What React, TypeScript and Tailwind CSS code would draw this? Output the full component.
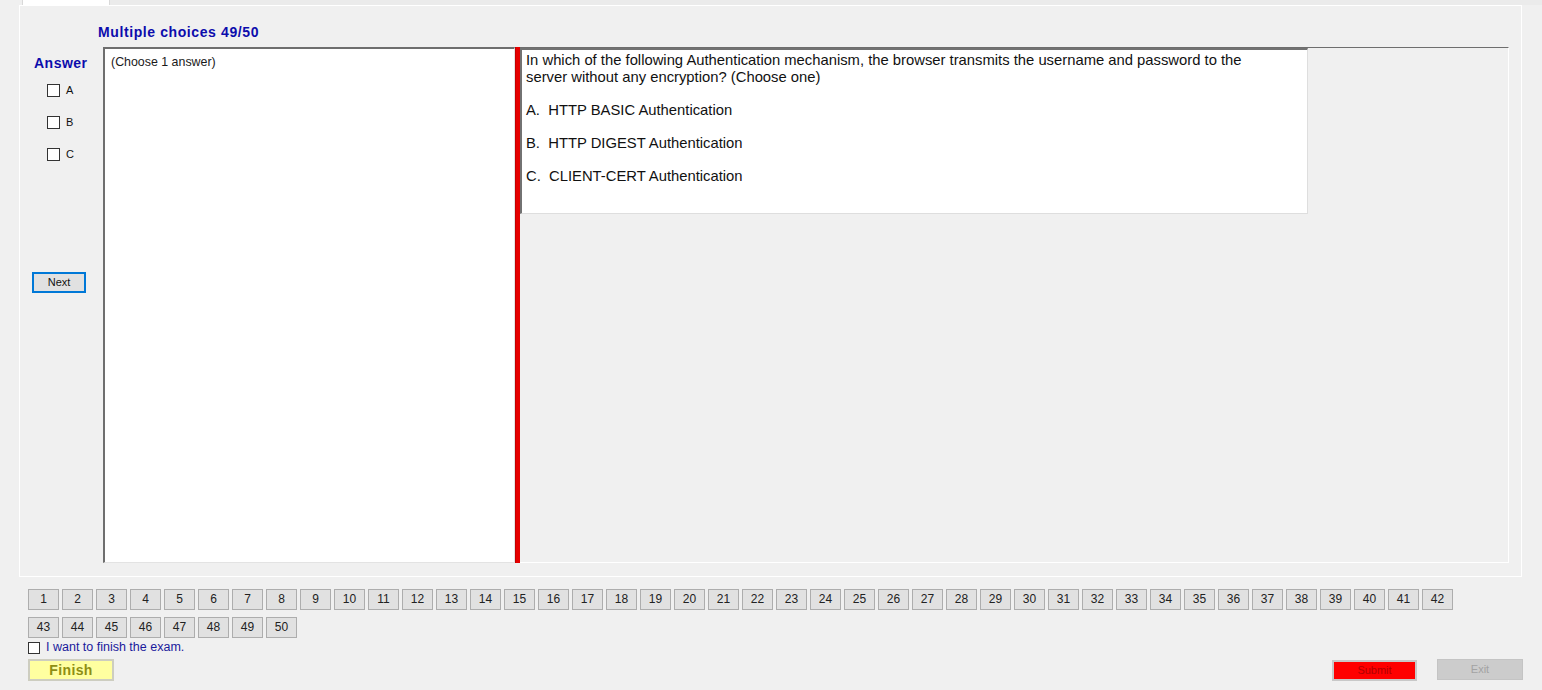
import React from 'react'

const numbers = Array.from({ length: 50 }, (_, i) => i + 1)

function Check({ label }: { label: string }) {
  return (
    <div className="flex items-center h-[13px]">
      <div className="w-[13px] h-[13px] border border-[#333333] bg-white" />
      <span className="ml-[6px] text-[11px] leading-[13px] text-[#111]">{label}</span>
    </div>
  )
}

export default function App() {
  return (
    <div className="w-[1542px] h-[690px] overflow-hidden bg-[#f0f0f0] font-['Liberation_Sans',Arial,sans-serif] text-black">
      {/* tab strip */}
      <div className="flex h-[5px]">
        <div className="w-[22px]" />
        <div className="w-[88px] h-full bg-white border-x border-[#d9d9d9]" />
        <div className="flex-1 bg-[#ebebeb]" />
      </div>

      {/* tab page */}
      <div className="ml-[19px] w-[1503px] h-[572px] border border-white">
        <div className="h-[41px] pl-[78px] pt-[18px]">
          <div className="text-[14px] leading-[16px] font-bold tracking-[0.6px] text-[#0c0cac]">
            Multiple choices 49/50
          </div>
        </div>

        <div className="flex h-[516px]">
          {/* answer column */}
          <div className="w-[83px] flex flex-col">
            <div className="pl-[14px] pt-[8px] text-[14px] leading-[16px] font-bold tracking-[0.5px] text-[#0c0cac]">
              Answer
            </div>
            <div className="mt-[13px] pl-[27px] flex flex-col gap-[19px]">
              <Check label="A" />
              <Check label="B" />
              <Check label="C" />
            </div>
            <div className="mt-[111px] pl-[12px]">
              <button className="block w-[54px] h-[21px] border-2 border-[#0078d7] bg-[#e1e1e1] text-[11px] leading-[17px] text-[#111]">
                Next
              </button>
            </div>
          </div>

          {/* split container */}
          <div className="w-[1406px] flex">
            <div className="w-[412px] h-full bg-white border-t-2 border-l-2 border-[#6e6e6e] border-r border-b border-r-[#e3e3e3] border-b-[#e3e3e3] px-[6px] pt-[6px]">
              <div className="text-[12.4px] leading-[14px] text-[#1a1a1a]">(Choose 1 answer)</div>
            </div>
            <div className="w-[5px] h-full bg-[#e60000] border-l border-[#c40000]" />
            <div className="flex-1 h-full border-t border-[#6e6e6e] border-r border-b border-r-white border-b-white">
              <div className="w-[788px] h-[166px] bg-white border-t-2 border-l-2 border-[#727272] border-r border-b border-r-[#dedede] border-b-[#dedede] pl-[4px] pt-[2px] text-[14.8px] leading-[16.6px] text-[#111]">
                <div>
                  In which of the following Authentication mechanism, the browser transmits the username and password to the
                  <br />
                  server without any encryption? (Choose one)
                </div>
                <div className="h-[16.6px]" />
                <div className="whitespace-pre">A.  HTTP BASIC Authentication</div>
                <div className="h-[16.6px]" />
                <div className="whitespace-pre">B.  HTTP DIGEST Authentication</div>
                <div className="h-[16.6px]" />
                <div className="whitespace-pre">C.  CLIENT-CERT Authentication</div>
              </div>
            </div>
          </div>
        </div>
      </div>

      {/* question navigation */}
      <div className="mt-[12px] pl-[28px]">
        <div className="w-[1428px] flex flex-wrap gap-x-[3px] gap-y-[7px]">
          {numbers.map(n => (
            <button
              key={n}
              className="w-[31px] h-[21px] border border-[#adadad] bg-[#e1e1e1] text-[12px] leading-[19px] text-[#222]"
            >
              {n}
            </button>
          ))}
        </div>

        <div className="mt-[2px] h-[15px] flex items-center">
          <div className="w-[12px] h-[12px] border border-[#333333] bg-white" />
          <span className="ml-[6px] text-[12.5px] leading-[15px] text-[#1a1a9c]">I want to finish the exam.</span>
        </div>

        <div className="mt-[4px] flex items-start justify-between pr-[19px]">
          <button className="w-[86px] h-[22px] border-2 border-[#cdcdc0] bg-[#ffffa0] text-[14px] leading-[18px] font-bold tracking-[0.4px] text-[#8e8e14]">
            Finish
          </button>
          <div className="flex items-start gap-[20px]">
            <button className="mt-[1px] w-[85px] h-[21px] border-2 border-[#c8c8c8] bg-[#ff0000] text-[11px] leading-[17px] text-[#b00000]">
              Submit
            </button>
            <button className="w-[86px] h-[21px] border border-[#c4c4c4] bg-[#cccccc] text-[11px] leading-[19px] text-[#a3a3a3]">
              Exit
            </button>
          </div>
        </div>
      </div>
    </div>
  )
}
